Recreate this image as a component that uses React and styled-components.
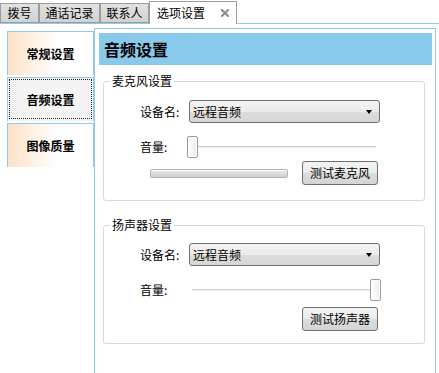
import React from "react";
import styled, { createGlobalStyle } from "styled-components";

const BLUE = "#8ccbee";

const GlobalStyle = createGlobalStyle`
  html, body {
    margin: 0;
    padding: 0;
    background: #fff;
    overflow: hidden;
  }
  body {
    font-family: "Noto Sans CJK SC", "Noto Sans", sans-serif;
    font-size: 12px;
    color: #000;
  }
  * { box-sizing: border-box; }
`;

const Page = styled.div`
  width: 439px;
  height: 373px;
`;

const TabBar = styled.div`
  display: flex;
  align-items: flex-end;
  height: 24px;
  border-bottom: 1px solid ${BLUE};
`;

const Tab = styled.div`
  width: ${(p) => p.$w}px;
  height: 20px;
  background: linear-gradient(#e2e2e2, #d2d2d2);
  border: 1px solid #9c9c9c;
  display: flex;
  align-items: center;
  justify-content: center;
  line-height: 14px;
  white-space: nowrap;
`;

const ActiveTab = styled.div`
  width: 88px;
  height: 23px;
  margin-bottom: -1px;
  background: #fff;
  border: 1px solid #9c9c9c;
  border-bottom: none;
  display: flex;
  align-items: center;
  padding: 0 0 1px 7px;
  line-height: 14px;
  white-space: nowrap;
  gap: 16px;
`;

const Close = styled.svg`
  flex: none;
  width: 8px;
  height: 8px;
  margin-top: 1px;
`;

const Body = styled.div`
  display: flex;
  padding-top: 4px;
`;

const SideNav = styled.div`
  width: 87px;
  margin-left: 7px;
  padding-top: 3px;
  display: flex;
  flex-direction: column;
  gap: 2px;
`;

const NavItem = styled.div`
  height: 44px;
  border: 1px solid ${BLUE};
  border-bottom: none;
  background: ${(p) =>
    p.$active
      ? "#f4f4f4"
      : "linear-gradient(to right, #fde0c6 0%, #fef1e5 30%, #ffffff 60%)"};
  outline: ${(p) => (p.$active ? "1px dotted #222" : "none")};
  outline-offset: -3px;
  display: flex;
  align-items: center;
  justify-content: center;
  font-weight: 700;
  line-height: 14px;
`;

const Panel = styled.div`
  width: 342px;
  height: 345px;
  border: 1px solid ${BLUE};
  border-bottom: none;
  padding: 4px 3px 0 4px;
`;

const Header = styled.div`
  height: 32px;
  background: #89c9ec;
  display: flex;
  align-items: center;
  padding-left: 5px;
  font-size: 16px;
  font-weight: 700;
  line-height: 18px;
`;

const Group = styled.fieldset`
  margin: ${(p) => p.$top}px 7px 0 4px;
  padding: ${(p) => p.$pad}px 0 ${(p) => p.$bottom}px 0;
  border: 1px solid #d8d8d8;
  border-radius: 3px;
  min-width: 0;
`;

const Legend = styled.legend`
  margin-left: 6px;
  padding: 0 2px;
  line-height: 14px;
`;

const Content = styled.div`
  width: 240px;
  margin-left: 36px;
  display: flex;
  flex-direction: column;
`;

const Row = styled.div`
  display: flex;
  align-items: center;
  margin-top: ${(p) => p.$gap || 0}px;
`;

const Label = styled.div`
  width: 49px;
  flex: none;
  line-height: 14px;
`;

const Select = styled.div`
  flex: 1;
  height: 23px;
  border: 1px solid #707070;
  border-radius: 3px;
  background: linear-gradient(#f3f3f3 0%, #ebebeb 50%, #dddddd 51%, #d6d6d6 100%);
  display: flex;
  align-items: center;
  justify-content: space-between;
  padding: 0 7px 0 3px;
  line-height: 14px;
`;

const Arrow = styled.span`
  width: 0;
  height: 0;
  border-left: 3.5px solid transparent;
  border-right: 3.5px solid transparent;
  border-top: 4px solid #000;
`;

const SliderBox = styled.div`
  flex: 1;
  height: 22px;
  margin-left: -2px;
  margin-right: -1px;
  position: relative;
  display: flex;
  align-items: center;
  padding: 0 5px;
`;

const Track = styled.div`
  flex: 1;
  height: 2px;
  border-top: 1px solid #cfcfcf;
  border-bottom: 1px solid #eeeeee;
`;

const Thumb = styled.div`
  position: absolute;
  top: 0;
  width: 11px;
  height: 22px;
  border: 1px solid #9a9a9a;
  border-radius: 2px;
  background: linear-gradient(to right, #ffffff, #ececec);
  box-shadow: inset 0 0 0 1px #fff;
`;

const ActionRow = styled.div`
  display: flex;
  align-items: center;
  justify-content: space-between;
  margin-top: ${(p) => p.$gap}px;
  padding-left: ${(p) => (p.$progress ? 10 : 0)}px;
  padding-right: 2px;
`;

const Progress = styled.div`
  width: 138px;
  height: 9px;
  border: 1px solid #b4b4b4;
  border-radius: 2px;
  background: linear-gradient(#f0f0f0 0%, #dedede 45%, #d0d0d0 100%);
  box-shadow: inset 0 1px 0 #fafafa;
`;

const Button = styled.button`
  margin-left: auto;
  width: 76px;
  height: 24px;
  border: 1px solid #707070;
  border-radius: 3px;
  background: linear-gradient(#f3f3f3 0%, #ebebeb 50%, #dddddd 51%, #d4d4d4 100%);
  font-family: inherit;
  font-size: 12px;
  line-height: 14px;
  color: #000;
  padding: 0;
`;

function Slider({ value }) {
  return (
    <SliderBox>
      <Track />
      <Thumb style={{ left: `calc(${value}% - ${value * 0.11}px)` }} />
    </SliderBox>
  );
}

const tabs = [
  { label: "拨号", w: 39 },
  { label: "通话记录", w: 61 },
  { label: "联系人", w: 49 },
];

const nav = ["常规设置", "音频设置", "图像质量"];

export default function App() {
  return (
    <Page>
      <GlobalStyle />
      <TabBar>
        {tabs.map((t) => (
          <Tab key={t.label} $w={t.w}>{t.label}</Tab>
        ))}
        <ActiveTab>
          <span>选项设置</span>
          <Close viewBox="0 0 8 8">
            <path d="M1 1 L7 7 M7 1 L1 7" stroke="#8a8a8a" strokeWidth="2" strokeLinecap="square" />
          </Close>
        </ActiveTab>
      </TabBar>
      <Body>
        <SideNav>
          {nav.map((n) => (
            <NavItem key={n} $active={n === "音频设置"}>{n}</NavItem>
          ))}
        </SideNav>
        <Panel>
          <Header>音频设置</Header>
          <Group $top={9} $pad={12} $bottom={15}>
            <Legend>麦克风设置</Legend>
            <Content>
              <Row>
                <Label>设备名:</Label>
                <Select>
                  <span>远程音频</span>
                  <Arrow />
                </Select>
              </Row>
              <Row $gap={13}>
                <Label>音量:</Label>
                <Slider value={0} />
              </Row>
              <ActionRow $gap={3} $progress>
                <Progress />
                <Button>测试麦克风</Button>
              </ActionRow>
            </Content>
          </Group>
          <Group $top={17} $pad={11} $bottom={12}>
            <Legend>扬声器设置</Legend>
            <Content>
              <Row>
                <Label>设备名:</Label>
                <Select>
                  <span>远程音频</span>
                  <Arrow />
                </Select>
              </Row>
              <Row $gap={13}>
                <Label>音量:</Label>
                <Slider value={100} />
              </Row>
              <ActionRow $gap={6}>
                <Button>测试扬声器</Button>
              </ActionRow>
            </Content>
          </Group>
        </Panel>
      </Body>
    </Page>
  );
}
